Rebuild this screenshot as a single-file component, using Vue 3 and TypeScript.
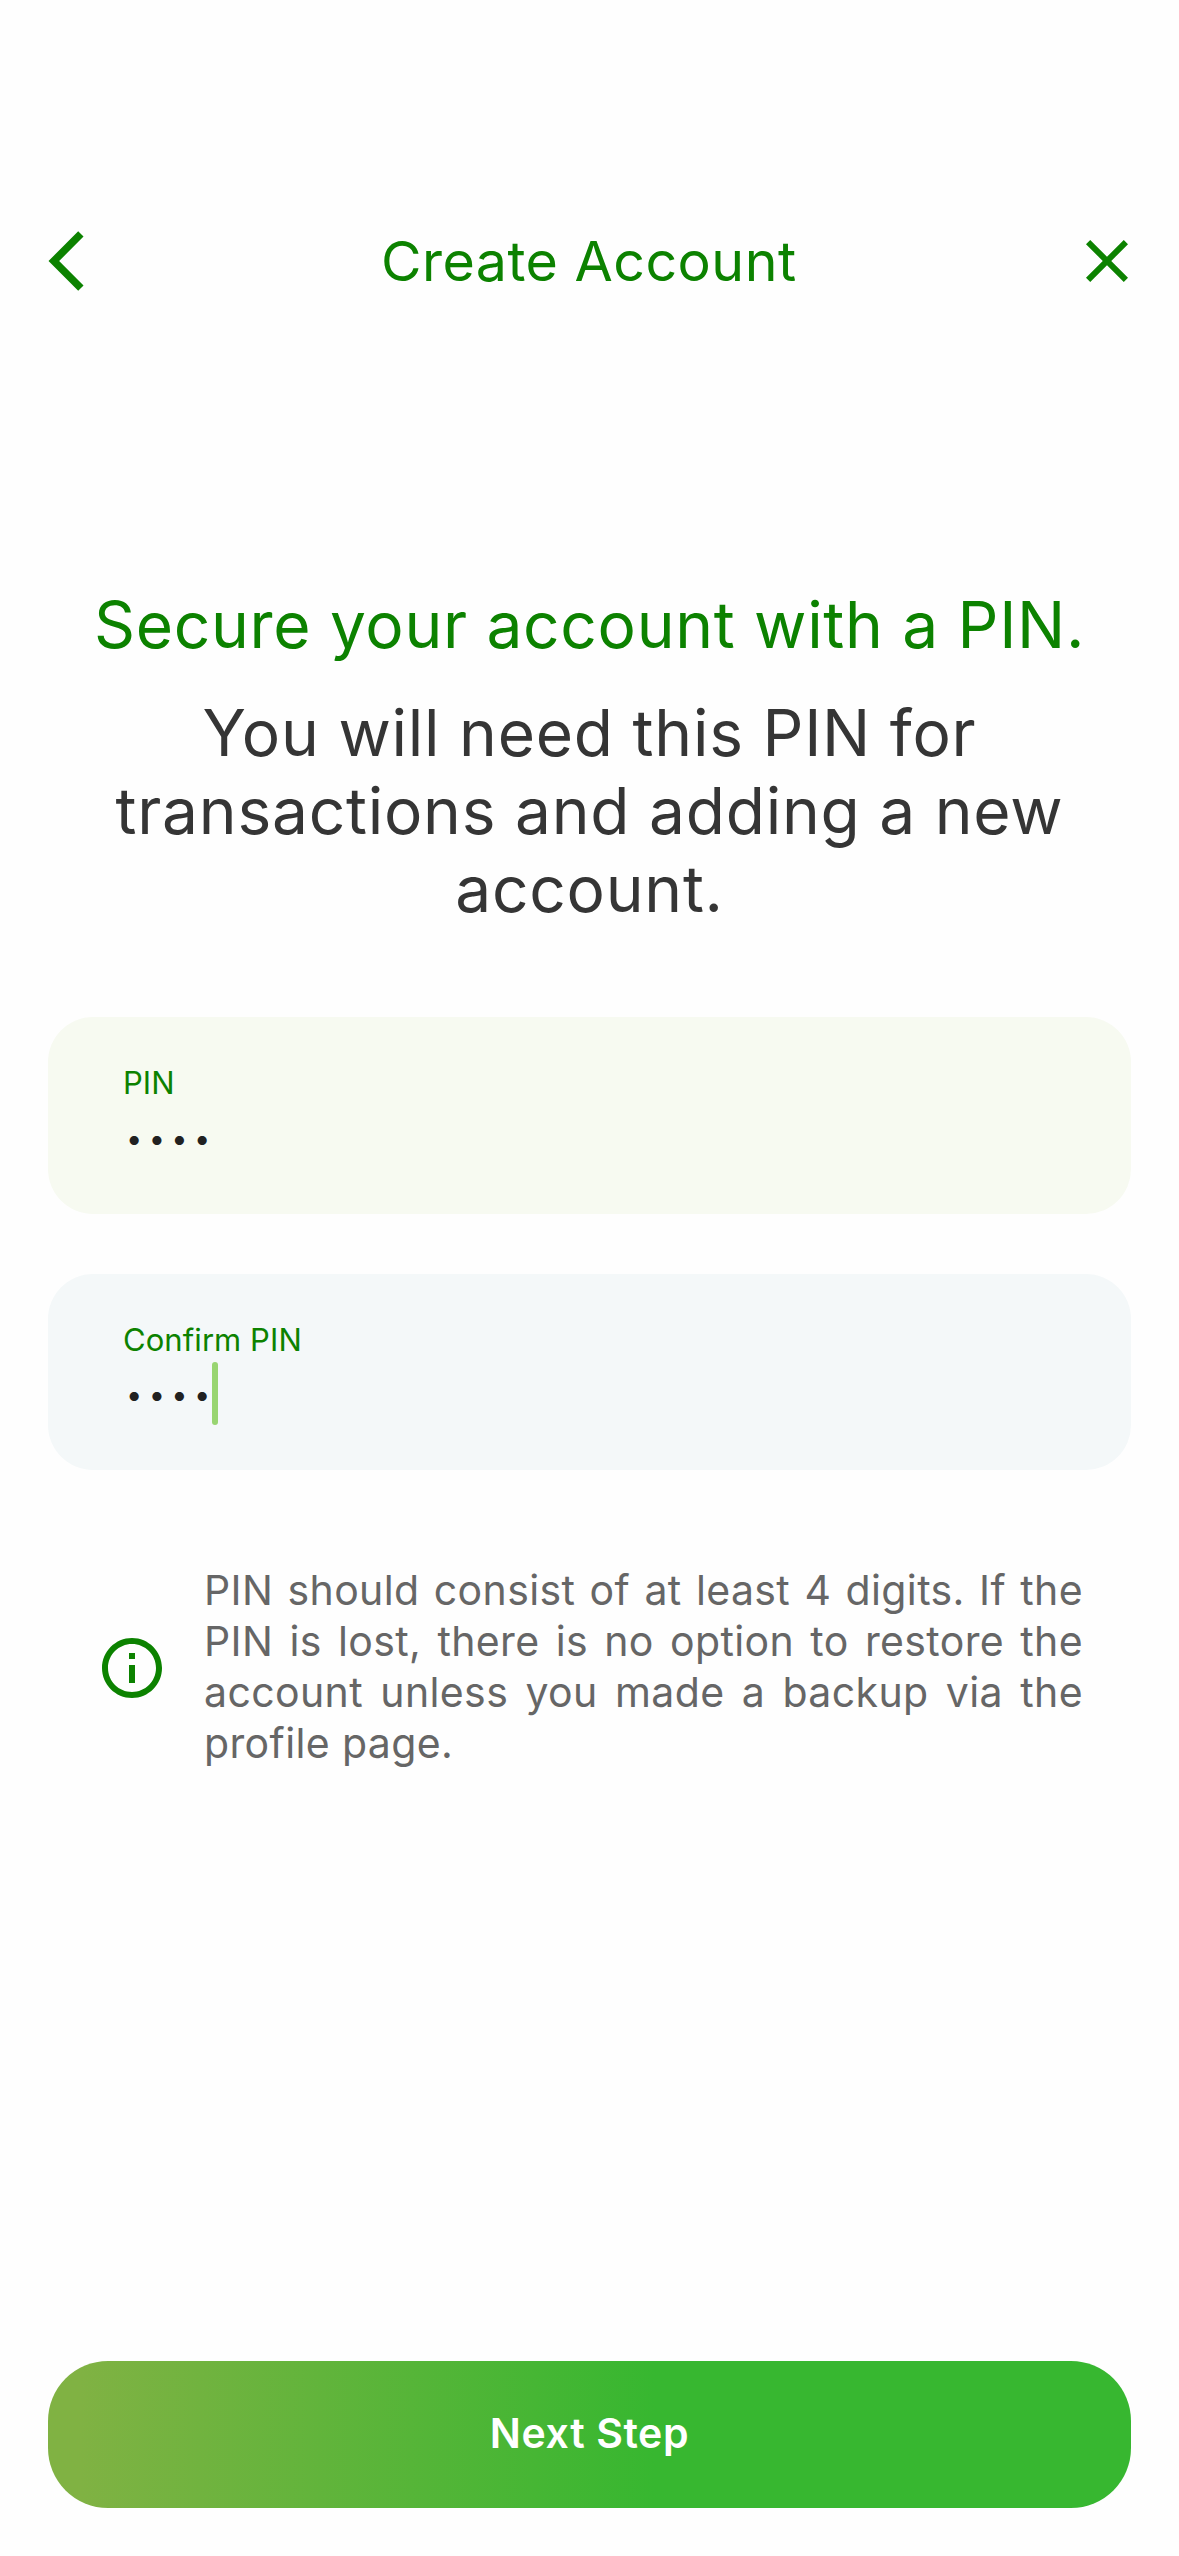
<script setup lang="ts">
import { ref } from 'vue'

interface PinField {
  id: string
  label: string
  value: string
  focused: boolean
}

const fields = ref<PinField[]>([
  { id: 'pin', label: 'PIN', value: '••••', focused: false },
  { id: 'confirm', label: 'Confirm PIN', value: '••••', focused: true },
])
</script>

<template>
  <div class="screen">
    <header class="bar">
      <svg class="icon" viewBox="0 0 24 24" aria-label="Back">
        <path d="M17.51 3.87 15.73 2.1 5.84 12l9.9 9.9 1.77-1.77L9.38 12z" />
      </svg>
      <h1 class="title">Create Account</h1>
      <svg class="icon" viewBox="0 0 24 24" aria-label="Close">
        <path d="M19 6.41 17.59 5 12 10.59 6.41 5 5 6.41 10.59 12 5 17.59 6.41 19 12 13.41 17.59 19 19 17.59 13.41 12z" />
      </svg>
    </header>

    <section class="intro">
      <h2 class="heading">Secure your account with a PIN.</h2>
      <p class="lead">You will need this PIN for transactions and adding a new account.</p>
    </section>

    <section class="fields">
      <div v-for="field in fields" :key="field.id" class="field" :class="{ focused: field.focused }">
        <span class="label">{{ field.label }}</span>
        <div class="value">
          <span class="dots">{{ field.value }}</span>
          <span v-if="field.focused" class="caret"></span>
        </div>
      </div>
    </section>

    <section class="note">
      <svg class="icon info" viewBox="0 0 24 24">
        <path d="M11 7h2v2h-2zm0 4h2v6h-2zm1-9C6.48 2 2 6.48 2 12s4.48 10 10 10 10-4.48 10-10S17.52 2 12 2zm0 18c-4.41 0-8-3.59-8-8s3.59-8 8-8 8 3.59 8 8-3.59 8-8 8z" />
      </svg>
      <p class="note-text">
        PIN should consist of at least 4 digits. If the PIN is lost, there is no option to restore
        the account unless you made a backup via the profile page.
      </p>
    </section>

    <button class="next" type="button">Next Step</button>
  </div>
</template>

<style>
body {
  margin: 0;
  background: #fefefe;
}
</style>

<style scoped>
.screen {
  box-sizing: border-box;
  display: flex;
  flex-direction: column;
  width: 1179px;
  height: 2556px;
  padding: 225px 48px 48px;
  background: #fefefe;
  color: #353535;
  font-family: Inter, 'Liberation Sans', sans-serif;
}

h1,
h2,
p {
  margin: 0;
  font-weight: 400;
}

.bar {
  display: flex;
  align-items: center;
  justify-content: space-between;
  height: 72px;
  margin: 0 -12px 0 -17.5px;
}

.icon {
  display: block;
  flex: none;
  width: 72px;
  height: 72px;
  fill: #0c8200;
}

.title {
  padding-left: 4px;
  color: #0c8200;
  font-size: 55.5px;
  line-height: 72px;
  letter-spacing: 0.48px;
}

.intro {
  display: flex;
  flex-direction: column;
  gap: 30px;
  margin-top: 289px;
  padding: 0 42px;
  text-align: center;
  font-size: 64px;
  line-height: 78px;
}

.heading {
  color: #0c8200;
  font-size: inherit;
  letter-spacing: 0.7px;
}

.lead {
  letter-spacing: 0.77px;
}

.fields {
  display: flex;
  flex-direction: column;
  gap: 60px;
  margin-top: 89px;
}

.field {
  box-sizing: border-box;
  height: 196.5px;
  padding: 48px 75px 0;
  border-radius: 45px;
  background: #f7faf1;
}

.field.focused {
  background: #f4f8f9;
}

.label {
  display: block;
  color: #0c8200;
  font-size: 31px;
  line-height: 36px;
  letter-spacing: 0.07px;
}

.value {
  position: relative;
  height: 63px;
  margin-top: 4.5px;
}

.dots {
  display: block;
  padding: 1px 0 0 3px;
  color: #212121;
  font-size: 29px;
  line-height: 63px;
  letter-spacing: 6.35px;
}

.caret {
  position: absolute;
  top: 0;
  left: 89px;
  width: 6px;
  height: 63px;
  border-radius: 3px;
  background: #98d571;
}

.note {
  display: flex;
  align-items: center;
  gap: 36px;
  margin-top: 95px;
  padding: 0 48px;
}

.info {
  margin-top: 2px;
}

.note-text {
  flex: 1;
  color: #666;
  font-size: 41px;
  line-height: 51px;
  letter-spacing: 0.38px;
  text-align: justify;
}

.next {
  box-sizing: border-box;
  height: 147px;
  margin-top: auto;
  padding: 0 0 3px;
  border: 0;
  border-radius: 60px;
  background: linear-gradient(90deg, #80b243 3%, #37b730 56%);
  color: #fff;
  font: 600 41px / 50px Inter, 'Liberation Sans', sans-serif;
  letter-spacing: 0.6px;
}
</style>
